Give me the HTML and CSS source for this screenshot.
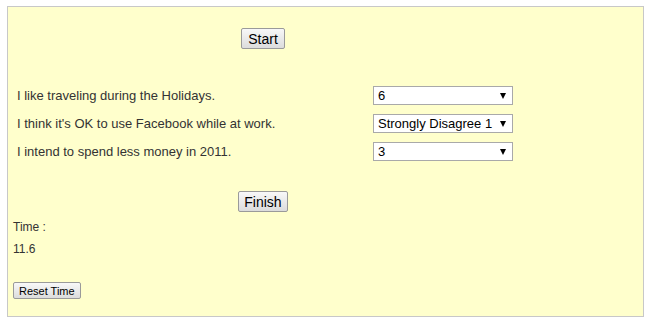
FILE: index.html
```html
<!DOCTYPE html>
<html lang="en">
<head>
    <meta charset="UTF-8">
    <title>Survey Timer</title>
    <link rel="stylesheet" href="styles.css">
</head>
<body>
    <div class="panel">
        <div class="survey">
            <div class="center-row start-row">
                <button class="btn">Start</button>
            </div>
            <div class="questions">
                <div class="question">
                    <span class="label">I like traveling during the Holidays.</span>
                    <span class="pick"><select><option>6</option></select></span>
                </div>
                <div class="question">
                    <span class="label">I think it's OK to use Facebook while at work.</span>
                    <span class="pick"><select><option>Strongly Disagree 1</option></select></span>
                </div>
                <div class="question">
                    <span class="label">I intend to spend less money in 2011.</span>
                    <span class="pick"><select><option>3</option></select></span>
                </div>
            </div>
            <div class="center-row finish-row">
                <button class="btn">Finish</button>
            </div>
        </div>
        <div class="time">
            <div>Time :</div>
            <div>11.6</div>
        </div>
        <button class="btn btn-small">Reset Time</button>
    </div>
</body>
</html>
```

FILE: styles.css
```css
body {
    margin: 0;
    font-family: "Liberation Sans", Arial, sans-serif;
    color: #333;
}

.panel {
    box-sizing: border-box;
    width: 637px;
    height: 311px;
    margin: 6px 0 0 7px;
    padding: 0 5px;
    background: #ffffcc;
    border: 1px solid #c8c8c8;
}

.survey {
    width: 500px;
}

.center-row {
    text-align: center;
    height: 21px;
}

.start-row {
    padding-top: 21px;
}

.finish-row {
    margin-top: 26px;
}

.btn {
    box-sizing: border-box;
    height: 21px;
    padding: 0 6px;
    font: 14px "Liberation Sans", Arial, sans-serif;
    color: #000;
    background: linear-gradient(#f8f8f8, #dcdcdc);
    border: 1px solid #9a9a9a;
    border-radius: 2px;
    vertical-align: top;
}

.finish-row .btn {
    padding: 0 5px;
}

.btn-small {
    height: 17px;
    padding: 0 5px;
    margin-top: 22px;
    font-size: 11px;
}

.questions {
    margin-top: 32px;
}

.question {
    display: grid;
    grid-template-columns: 360px auto;
    align-items: center;
    height: 28px;
    font-size: 13px;
}

.label {
    padding-left: 4px;
}

.pick {
    position: relative;
    display: inline-block;
    width: 140px;
    height: 19px;
}

.pick select {
    appearance: none;
    box-sizing: border-box;
    width: 140px;
    height: 19px;
    margin: 0;
    padding: 0 0 0 4px;
    font: 13px "Liberation Sans", Arial, sans-serif;
    color: #000;
    background: #fff;
    border: 1px solid #a9a9a9;
    border-radius: 0;
}

.pick::after {
    content: "";
    position: absolute;
    right: 7px;
    top: 7px;
    border-left: 3px solid transparent;
    border-right: 3px solid transparent;
    border-top: 6px solid #000;
}

.time {
    margin-top: 4px;
    font-size: 12px;
    line-height: 22px;
}
```
